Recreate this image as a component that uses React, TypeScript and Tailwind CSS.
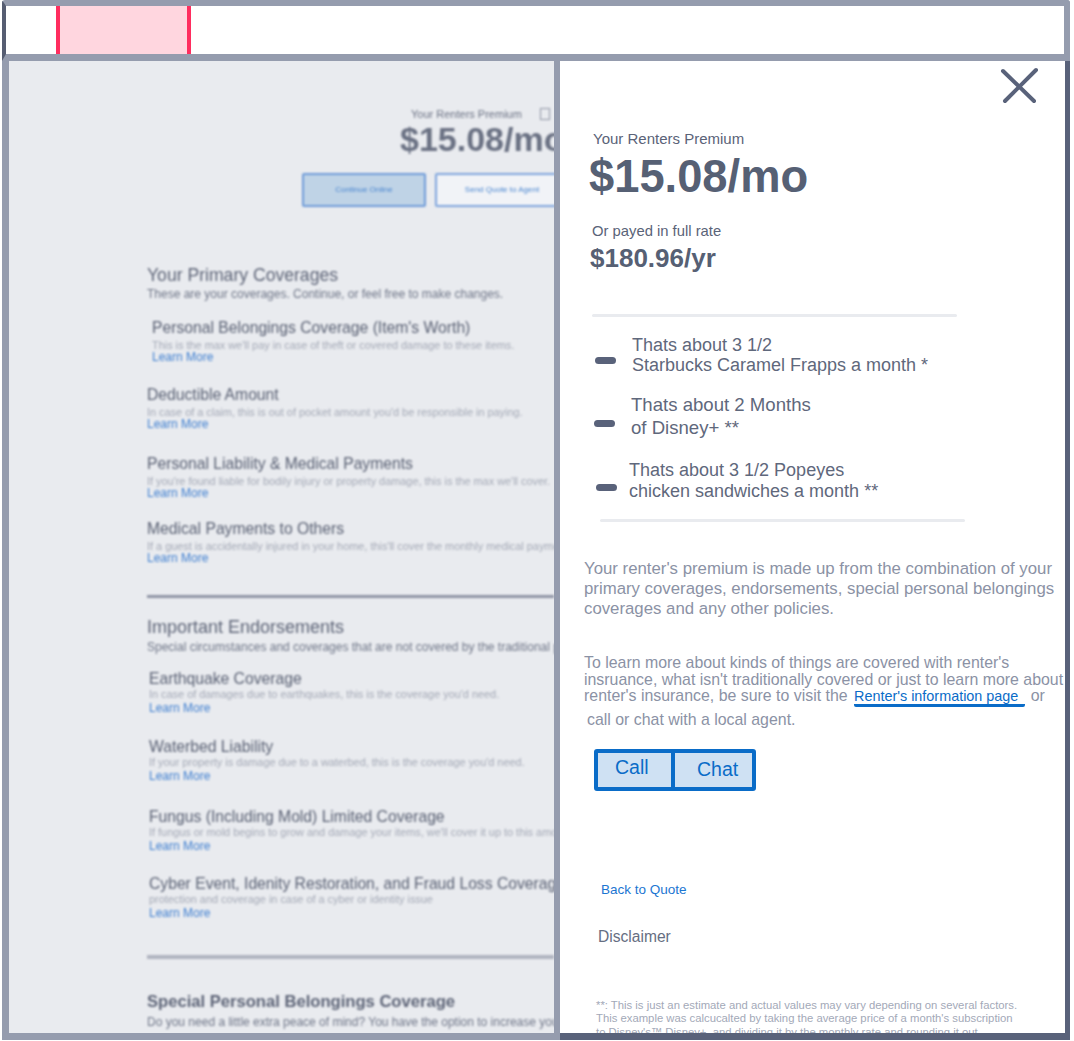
const primaryItems = [
  { title: "Personal Belongings Coverage (Item's Worth)", desc: "This is the max we'll pay in case of theft or covered damage to these items.", box: "mt-[19px] ml-[5px]" },
  { title: "Deductible Amount", desc: "In case of a claim, this is out of pocket amount you'd be responsible in paying.", box: "mt-[24px]" },
  { title: "Personal Liability & Medical Payments", desc: "If you're found liable for bodily injury or property damage, this is the max we'll cover.", box: "mt-[26px]" },
  { title: "Medical Payments to Others", desc: "If a guest is accidentally injured in your home, this'll cover the monthly medical payments.", box: "mt-[22px]" },
];

const endorsementItems = [
  { title: "Earthquake Coverage", desc: "In case of damages due to earthquakes, this is the coverage you'd need.", box: "mt-[17px]" },
  { title: "Waterbed Liability", desc: "If your property is damage due to a waterbed, this is the coverage you'd need.", box: "mt-[25px]" },
  { title: "Fungus (Including Mold) Limited Coverage", desc: "If fungus or mold begins to grow and damage your items, we'll cover it up to this amount.", box: "mt-[27px]" },
  { title: "Cyber Event, Idenity Restoration, and Fraud Loss Coverage", desc: "protection and coverage in case of a cyber or identity issue", box: "mt-[24px]" },
];

const comparisons = [
  { lines: ["Thats about 3 1/2", "Starbucks Caramel Frapps a month *"], box: "mt-[18px] ml-[35px] gap-[16px]", text: "text-[18px] leading-[20px]", dash: "mt-[22px]" },
  { lines: ["Thats about 2 Months", "of Disney+ **"], box: "mt-[18px] ml-[34px] gap-[16px]", text: "text-[18.6px] leading-[23px]", dash: "mt-[27px]" },
  { lines: ["Thats about 3 1/2 Popeyes", "chicken sandwiches a month **"], box: "mt-[21px] ml-[36px] gap-[12px]", text: "text-[18px] leading-[21px]", dash: "mt-[24px]" },
];

function CoverageItem({ title, desc, box, descGap, linkGap }: { title: string; desc: string; box: string; descGap: string; linkGap: string }) {
  return (
    <div className={`${box} whitespace-nowrap`}>
      <p className="text-[15.7px] leading-[16px] text-[#596073]">{title}</p>
      <p className={`text-[10.9px] leading-[14px] text-[#a4a9b6] ${descGap}`}>{desc}</p>
      <p className={`text-[12px] leading-[12px] text-[#3f7fd0] ${linkGap}`}>Learn More</p>
    </div>
  );
}

function BlurredQuote() {
  return (
    <div className="w-[558px] h-full shrink-0 border-l-[7px] border-r-[6px] border-b-[7px] border-[#959cae] bg-[#e9ebef] overflow-hidden">
      <div className="blur-[1.3px] whitespace-nowrap">
        <div className="pl-[391px] pt-[46px] flex flex-col">
          <div className="flex items-center gap-[18px] ml-[11px] text-[11px] leading-[14px] text-[#6b7284]">
            <span>Your Renters Premium</span>
            <span className="w-[10px] h-[12px] border border-[#8f95a5]"></span>
          </div>
          <div className="text-[34px] leading-[38px] font-bold text-[#6a7183] -mt-px">$15.08/mo</div>
        </div>
        <div className="flex gap-[9px] ml-[293px] mt-[15px]">
          <div className="w-[124px] h-[34px] shrink-0 border-2 border-[#6f9bd8] rounded-[2px] bg-[#bfd3e6] flex items-center justify-center text-[8px] text-[#4a86d0]">
            Continue Online
          </div>
          <div className="w-[134px] h-[34px] shrink-0 border-2 border-[#7fa5dc] rounded-[2px] bg-[#f1f3f7] flex items-center justify-center text-[8px] text-[#4a86d0]">
            Send Quote to Agent
          </div>
        </div>

        <div className="ml-[138px] mt-[58px]">
          <h2 className="text-[17.6px] leading-[20px] text-[#5c6376]">Your Primary Coverages</h2>
          <p className="text-[12px] leading-[14px] mt-[2px] text-[#6f7688]">These are your coverages. Continue, or feel free to make changes.</p>
          {primaryItems.map((item) => (
            <CoverageItem key={item.title} {...item} descGap="mt-[2px]" linkGap="-mt-px" />
          ))}
          <div className="h-[3px] bg-[#8f95a5] mt-[31px]"></div>

          <h2 className="text-[18px] leading-[20px] text-[#5c6376] mt-[19px]">Important Endorsements</h2>
          <p className="text-[12px] leading-[14px] mt-[3px] text-[#6f7688]">Special circumstances and coverages that are not covered by the traditional policy.</p>
          <div className="ml-[2px]">
            {endorsementItems.map((item) => (
              <CoverageItem key={item.title} {...item} descGap="mt-0" linkGap="mt-px" />
            ))}
          </div>
          <div className="h-[4px] bg-[#b0b4c0] mt-[36px]"></div>

          <h2 className="text-[16.6px] leading-[20px] font-bold text-[#5c6376] mt-[33px]">Special Personal Belongings Coverage</h2>
          <p className="text-[12px] leading-[14px] mt-[3px] text-[#6f7688]">Do you need a little extra peace of mind? You have the option to increase your coverage.</p>
        </div>
      </div>
    </div>
  );
}

function PremiumPanel() {
  return (
    <div className="flex-1 min-w-0 h-full bg-white border-r-[5px] border-b-[7px] border-[#59627a] overflow-hidden">
      <div className="flex justify-end pr-[26px] pt-[5px]">
        <svg width="40" height="38" viewBox="0 0 40 38" fill="none" stroke="#59627a" strokeWidth="4" strokeLinecap="round">
          <path d="M4 5 L35 35" />
          <path d="M37 4 L6 35" />
        </svg>
      </div>

      <div className="ml-[33px] mt-[26px] text-[15px] leading-[18px] text-[#5a6378]">Your Renters Premium</div>
      <div className="ml-[29px] mt-[3px] text-[45.3px] leading-[52px] font-bold text-[#566074]">$15.08/mo</div>
      <div className="ml-[32px] mt-[19px] text-[14.8px] leading-[18px] text-[#5a6378]">Or payed in full rate</div>
      <div className="ml-[30px] mt-[1px] text-[26px] leading-[34px] font-bold text-[#566074]">$180.96/yr</div>

      <div className="ml-[32px] mt-[39px] w-[365px] h-[3px] rounded-full bg-[#e9ebef]"></div>

      {comparisons.map((c) => (
        <div key={c.lines[0]} className={`flex items-start ${c.box}`}>
          <div className={`w-[21px] h-[7px] rounded-full bg-[#59627a] shrink-0 ${c.dash}`}></div>
          <p className={`whitespace-nowrap text-[#5f687c] ${c.text}`}>
            {c.lines[0]}
            <br />
            {c.lines[1]}
          </p>
        </div>
      ))}

      <div className="ml-[40px] mt-[17px] w-[365px] h-[3px] rounded-full bg-[#e9ebef]"></div>

      <p className="ml-[24px] mt-[37px] w-[480px] text-[16.8px] leading-[20px] text-[#8b92a5]">
        Your renter's premium is made up from the combination of your primary coverages, endorsements, special personal belongings coverages and any other policies.
      </p>

      <div className="ml-[24px] mt-[36px] text-[15.9px] leading-[16.5px] text-[#8b92a5] whitespace-nowrap">
        <p>To learn more about kinds of things are covered with renter's</p>
        <p>insruance, what isn't traditionally covered or just to learn more about</p>
        <p>
          renter's insurance, be sure to visit the{" "}
          <a className="inline-block ml-[2px] pr-[7px] text-[14.4px] leading-[16px] text-[#0a6cc8] border-b-[3px] border-[#0a6cc8] rounded-b-[2px]">
            Renter's information page
          </a>{" "}
          <span className="ml-[1px]">or</span>
        </p>
        <p className="ml-[3px] mt-[5px]">call or chat with a local agent.</p>
      </div>

      <div className="ml-[34px] mt-[20px] w-[162px] h-[42px] flex border-4 border-[#0a6cc8] rounded-[3px] bg-[#cfe1f3] text-[19.5px] text-[#0a6cc8]">
        <div className="w-[77px] border-r-4 border-[#0a6cc8] pl-[17px] leading-[29px]">Call</div>
        <div className="flex-1 pl-[22px] leading-[32px]">Chat</div>
      </div>

      <a className="block ml-[41px] mt-[90px] text-[13.5px] leading-[18px] text-[#1c76d2]">Back to Quote</a>
      <div className="ml-[38px] mt-[29px] text-[15.6px] leading-[18px] text-[#666e82]">Disclaimer</div>

      <p className="ml-[36px] mt-[53px] text-[11.3px] leading-[13.5px] text-[#a3a9b8] whitespace-nowrap">
        **: This is just an estimate and actual values may vary depending on several factors.
        <br />
        This example was calcucalted by taking the average price of a month's subscription
        <br />
        to Disney's™ Disney+, and dividing it by the monthly rate and rounding it out.
      </p>
    </div>
  );
}

export default function App() {
  return (
    <div className="w-[1074px] h-[1041px] flex flex-col overflow-hidden bg-white pl-[2px] pr-[4px] pb-px font-['Liberation_Sans',Arial,sans-serif]">
      <div className="h-[61px] shrink-0 flex border-t-[6px] border-b-[7px] border-l-[4px] border-r-[6px] border-t-[#959cae] border-b-[#959cae] border-l-[#565d72] border-r-[#959cae] rounded-t-[3px] pl-[50px]">
        <div className="w-[135px] h-full border-x-4 border-[#ff2d5f] bg-[#ffd6df]"></div>
      </div>
      <div className="flex-1 min-h-0 flex">
        <BlurredQuote />
        <PremiumPanel />
      </div>
    </div>
  );
}
